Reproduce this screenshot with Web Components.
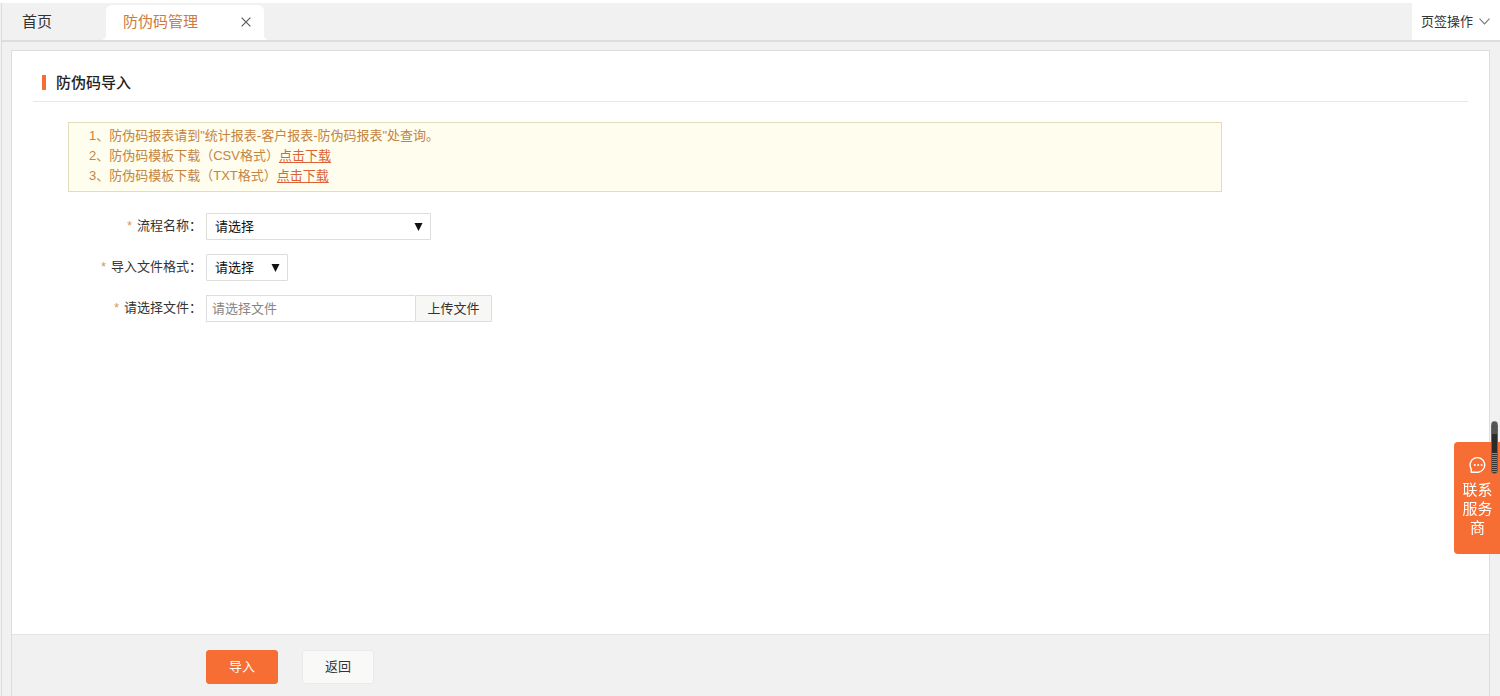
<!DOCTYPE html>
<html lang="zh-CN">
<head>
<meta charset="utf-8">
<title>防伪码管理</title>
<style>
  html, body { margin: 0; height: 100%; }
  body {
    --accent: #f66e34;
    --line: #dddddb;
    background: #f1f1f1;
    color: #333;
    font: 13px/20px "Liberation Sans", "Noto Sans CJK SC", sans-serif;
  }
</style>
</head>
<body>
<app-shell>
  <tab-bar slot="tabs">
    <tab-item>首页</tab-item>
    <tab-item active closable>防伪码管理</tab-item>
    <tab-menu slot="end">页签操作</tab-menu>
  </tab-bar>
  <page-title>防伪码导入</page-title>
  <notice-box>
    <notice-line>1、防伪码报表请到"统计报表-客户报表-防伪码报表"处查询。</notice-line>
    <notice-line link="点击下载">2、防伪码模板下载（CSV格式）</notice-line>
    <notice-line link="点击下载">3、防伪码模板下载（TXT格式）</notice-line>
  </notice-box>
  <import-form></import-form>
  <action-bar slot="footer">
    <action-button primary>导入</action-button>
    <action-button>返回</action-button>
  </action-bar>
</app-shell>
<contact-widget>联系服务商</contact-widget>

<script>
const define = (name, render) => customElements.define(name, class extends HTMLElement {
  connectedCallback() {
    if (this.shadowRoot) return;
    this.attachShadow({ mode: 'open' }).innerHTML = render(this);
  }
});

define('app-shell', () => `
  <style>
    :host { display: flex; flex-direction: column; min-height: 100vh; box-sizing: border-box; border-top: 3px solid #fff; }
    .body { flex: 1; display: flex; margin-left: 1px; padding: 8px 10px 0 9px; border-left: 1px solid var(--line); }
    main { flex: 1; min-width: 0; display: flex; flex-direction: column; background: #fff; border: 1px solid var(--line); border-bottom: 0; }
    .content { flex: 1; padding: 16px 21px; }
  </style>
  <slot name="tabs"></slot>
  <div class="body">
    <main>
      <div class="content"><slot></slot></div>
      <slot name="footer"></slot>
    </main>
  </div>`);

define('tab-bar', () => `
  <style>
    :host { display: block; }
    nav { display: flex; align-items: stretch; height: 37px; margin-left: 1px; border-left: 1px solid var(--line); border-bottom: 2px solid var(--line); }
    .grow { flex: 1; }
  </style>
  <nav><slot></slot><div class="grow"></div><slot name="end"></slot></nav>`);

define('tab-item', el => `
  <style>
    :host { display: flex; align-items: stretch; padding-top: 2px; font-size: 15px; }
    button { font: inherit; color: inherit; background: none; border: 0; padding: 0; cursor: pointer; }
    .tab { display: flex; align-items: center; padding: 0 20px 2px; }
    :host([active]) { margin-left: 34px; color: #cd7a40; }
    :host([active]) .tab { position: relative; gap: 43px; padding: 0 13px 2px 17px; background: #fff; border-radius: 6px 6px 0 0; }
    :host([active]) .tab::before, :host([active]) .tab::after { content: ""; position: absolute; bottom: 0; width: 5px; height: 5px; }
    .tab::before { right: 100%; background: radial-gradient(circle at 0 0, transparent 5px, #fff 5px); }
    .tab::after { left: 100%; background: radial-gradient(circle at 100% 0, transparent 5px, #fff 5px); }
    .close { display: flex; }
  </style>
  <div class="tab">
    <button type="button"><slot></slot></button>
    ${el.hasAttribute('closable') ? `<button type="button" class="close" aria-label="关闭">
      <svg width="10" height="10" viewBox="0 0 10 10" fill="none" stroke="#555" stroke-width="1.1"><path d="M.6.6l8.8 8.8M9.4.6L.6 9.4"/></svg>
    </button>` : ''}
  </div>`);

define('tab-menu', () => `
  <style>
    :host { display: flex; }
    button { display: flex; align-items: center; gap: 6px; padding: 0 10px 0 9px; border: 0; background: #fff; color: #333; font: inherit; cursor: pointer; }
  </style>
  <button type="button"><slot></slot>
    <svg width="11" height="7" viewBox="0 0 11 7" fill="none" stroke="#777" stroke-width="1.1"><path d="M.5.7l5 5.3 5-5.3"/></svg>
  </button>`);

define('page-title', () => `
  <style>
    :host { display: block; border-bottom: 1px solid #e8e8e8; }
    h1 { display: flex; align-items: center; gap: 10px; margin: 0; padding: 5px 9px 8px; font-size: 15px; line-height: 21px; font-weight: 500; color: #222; }
    h1::before { content: ""; width: 4px; height: 15px; background: var(--accent); }
  </style>
  <h1><slot></slot></h1>`);

define('notice-box', () => `
  <style>
    :host { display: block; margin: 20px 246px 21px 35px; padding: 3px 20px 5px; background: #fffdee; border: 1px solid #e3dcb9; color: #c48442; }
  </style>
  <slot></slot>`);

define('notice-line', el => `
  <style>
    :host { display: block; height: 20px; }
    a { color: #dc6237; text-underline-offset: 2px; }
  </style>
  <slot></slot>${el.hasAttribute('link') ? `<a href="#">${el.getAttribute('link')}</a>` : ''}`);

define('import-form', () => `
  <style>
    :host { display: block; }
    form { display: grid; grid-template-columns: 169px 1fr; column-gap: 4px; row-gap: 14px; }
    label { text-align: right; line-height: 26px; }
    label::before { content: "*"; margin-right: 5px; color: #d59a5c; }
    .field { display: flex; height: 27px; }
    select, input, button { box-sizing: border-box; font: inherit; border: 1px solid var(--line); border-radius: 1px; outline: 0; }
    select { appearance: none; padding: 0 8px; background: #fff; color: #111; }
    .wide { width: 225px; }
    .narrow { width: 82px; }
    .select { display: grid; align-items: center; }
    .select > * { grid-area: 1 / 1; }
    .select select { height: 27px; }
    .select svg { justify-self: end; margin-right: 8px; pointer-events: none; z-index: 1; }
    input { width: 209px; padding: 0 5px; background: #fff; color: #333; border-right: 0; }
    input::placeholder { color: #8a8580; opacity: 1; }
    button { width: 77px; padding: 0; background: #f7f7f6; color: #333; cursor: pointer; }
  </style>
  <form>
    <label for="flow">流程名称：</label>
    <div class="field"><div class="select">
      <select id="flow" class="wide"><option>请选择</option></select>
      <svg width="9" height="8" viewBox="0 0 9 8"><path d="M.5 0h8l-4 8z" fill="#111"/></svg>
    </div></div>
    <label for="format">导入文件格式：</label>
    <div class="field"><div class="select">
      <select id="format" class="narrow"><option>请选择</option></select>
      <svg width="9" height="8" viewBox="0 0 9 8"><path d="M.5 0h8l-4 8z" fill="#111"/></svg>
    </div></div>
    <label for="file">请选择文件：</label>
    <div class="field"><input id="file" type="text" placeholder="请选择文件"><button type="button">上传文件</button></div>
  </form>`);

define('action-bar', () => `
  <style>
    :host { display: flex; gap: 24px; padding: 15px 194px 12px; background: #f1f1f1; border-top: 1px solid #e4e4e0; }
  </style>
  <slot></slot>`);

define('action-button', () => `
  <style>
    :host { display: block; }
    button { box-sizing: border-box; width: 72px; height: 34px; padding: 0; border: 1px solid #eaeae8; border-radius: 3px; background: #f9f9f8; color: #333; font: inherit; cursor: pointer; }
    :host([primary]) button { border-color: var(--accent); background: var(--accent); color: #fff; }
  </style>
  <button type="button"><slot></slot></button>`);

define('contact-widget', () => `
  <style>
    :host { position: fixed; right: 0; bottom: 142px; z-index: 2; }
    button { display: flex; flex-direction: column; align-items: center; gap: 6px; box-sizing: border-box; width: 46px; height: 112px; padding: 14px 7px 0 8px; border: 0; border-radius: 4px 0 0 4px; background: var(--accent); color: #fff; font: inherit; font-size: 15px; line-height: 19px; cursor: pointer; }
    i { position: absolute; right: 2px; bottom: 80px; width: 7px; height: 53px; box-sizing: border-box; border: 1px solid #666; border-radius: 4px; background: linear-gradient(#555 0 12px, #2b2b2b 12px 31px, transparent 31px), repeating-linear-gradient(#333 0 1px, #888 1px 2px); }
  </style>
  <button type="button">
    <svg width="18" height="18" viewBox="0 0 18 18" fill="none" stroke="#fff" stroke-width="1.4" stroke-linejoin="round"><path d="M2.2 16.2v-3.4A7.3 7.3 0 1 1 9 16.2z"/><g fill="#fff" stroke="none"><circle cx="5.8" cy="9" r="1"/><circle cx="9.2" cy="9" r="1"/><circle cx="12.6" cy="9" r="1"/></g></svg>
    <span><slot></slot></span>
  </button>
  <i></i>`);
</script>
</body>
</html>
